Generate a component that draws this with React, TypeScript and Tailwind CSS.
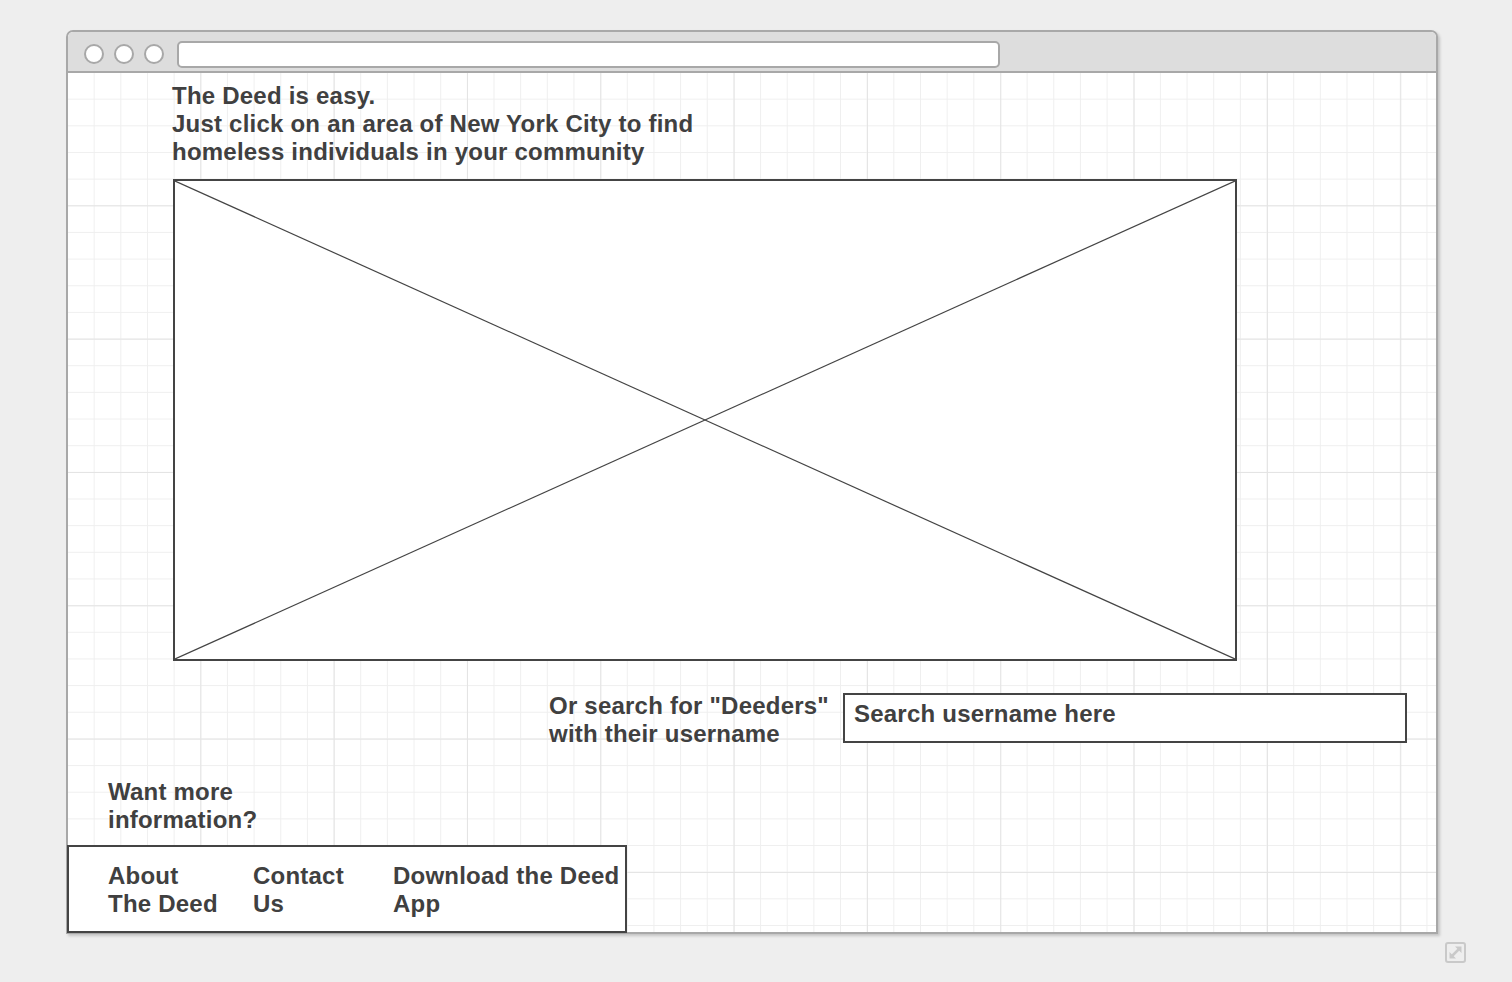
import React from "react";

const font = { fontFamily: '"Liberation Sans", Arial, Helvetica, sans-serif' };

export default function App() {
  return (
    <div
      className="min-h-[982px] w-[1512px] bg-[#eeeeee] pt-[30px] pl-[66px] text-[#404040] font-bold text-[24px] leading-[28px] tracking-[0.22px]"
      style={font}
    >
      <div className="flex items-start">
        <div className="flex h-[904px] w-[1372px] flex-col rounded-t-[7px] border-2 border-[#a8a8a8] bg-white shadow-[2px_2px_3px_rgba(0,0,0,0.18)]">
          {/* chrome */}
          <div className="flex h-[39px] shrink-0 items-center gap-[10px] rounded-t-[5px] bg-[#dddddd] pl-[16px] pt-[5px]">
            <div className="h-[20px] w-[20px] rounded-full border-2 border-[#a8a8a8] bg-white" />
            <div className="h-[20px] w-[20px] rounded-full border-2 border-[#a8a8a8] bg-white" />
            <div className="h-[20px] w-[20px] rounded-full border-2 border-[#a8a8a8] bg-white" />
            <div className="ml-[3px] h-[27px] w-[823px] rounded-[5px] border-2 border-[#a8a8a8] bg-white" />
          </div>
          <div className="h-[2px] shrink-0 bg-[#a8a8a8]" />
          {/* content */}
          <div className="flex flex-1 flex-col bg-white bg-[linear-gradient(to_right,#e4e4e4_1px,transparent_1px),linear-gradient(to_bottom,#e4e4e4_1px,transparent_1px),linear-gradient(to_right,#efefef_1px,transparent_1px),linear-gradient(to_bottom,#efefef_1px,transparent_1px)] bg-[size:133.333px_133.333px,133.333px_133.333px,26.6667px_26.6667px,26.6667px_26.6667px] bg-[position:-1px_-1px]">
            <div className="ml-[104px] mt-[9px]">
              <div>The Deed is easy.</div>
              <div>Just click on an area of New York City to find</div>
              <div>homeless individuals in your community</div>
            </div>
            <div className="ml-[105px] mt-[13px] h-[482px] w-[1064px] border-2 border-[#444444] bg-white">
              <svg className="block h-full w-full" viewBox="0 0 100 100" preserveAspectRatio="none">
                <line x1="0" y1="0" x2="100" y2="100" stroke="#444444" strokeWidth="1.2" vectorEffect="non-scaling-stroke" />
                <line x1="100" y1="0" x2="0" y2="100" stroke="#444444" strokeWidth="1.2" vectorEffect="non-scaling-stroke" />
              </svg>
            </div>
            <div className="ml-[481px] mt-[31px] flex items-start">
              <div className="w-[294px]">
                <div>Or search for "Deeders"</div>
                <div>with their username</div>
              </div>
              <div className="mt-[1px] h-[50px] w-[564px] border-2 border-[#444444] bg-white pl-[9px] pt-[5px]">
                Search username here
              </div>
            </div>
            <div className="ml-[40px] mt-[30px]">
              <div>Want more</div>
              <div>information?</div>
            </div>
            <div className="-mb-[1px] -ml-[1px] mt-auto flex h-[88px] w-[560px] border-2 border-[#444444] bg-white pl-[39px] pt-[15px]">
              <div className="w-[145px]">
                <div>About</div>
                <div>The Deed</div>
              </div>
              <div className="w-[140px]">
                <div>Contact</div>
                <div>Us</div>
              </div>
              <div>
                <div>Download the Deed</div>
                <div>App</div>
              </div>
            </div>
          </div>
        </div>
        <svg className="ml-[7px] mt-[912px] shrink-0" width="21" height="21" viewBox="0 0 21 21">
          <rect x="1" y="1" width="19" height="19" rx="2" fill="none" stroke="#c9c9c9" strokeWidth="2" />
          <line x1="6" y1="15" x2="15" y2="6" stroke="#c9c9c9" strokeWidth="2.5" />
          <polygon points="16.5,4.5 16.5,11 10,4.5" fill="#c9c9c9" />
          <polygon points="4.5,16.5 4.5,10 11,16.5" fill="#c9c9c9" />
        </svg>
      </div>
    </div>
  );
}
